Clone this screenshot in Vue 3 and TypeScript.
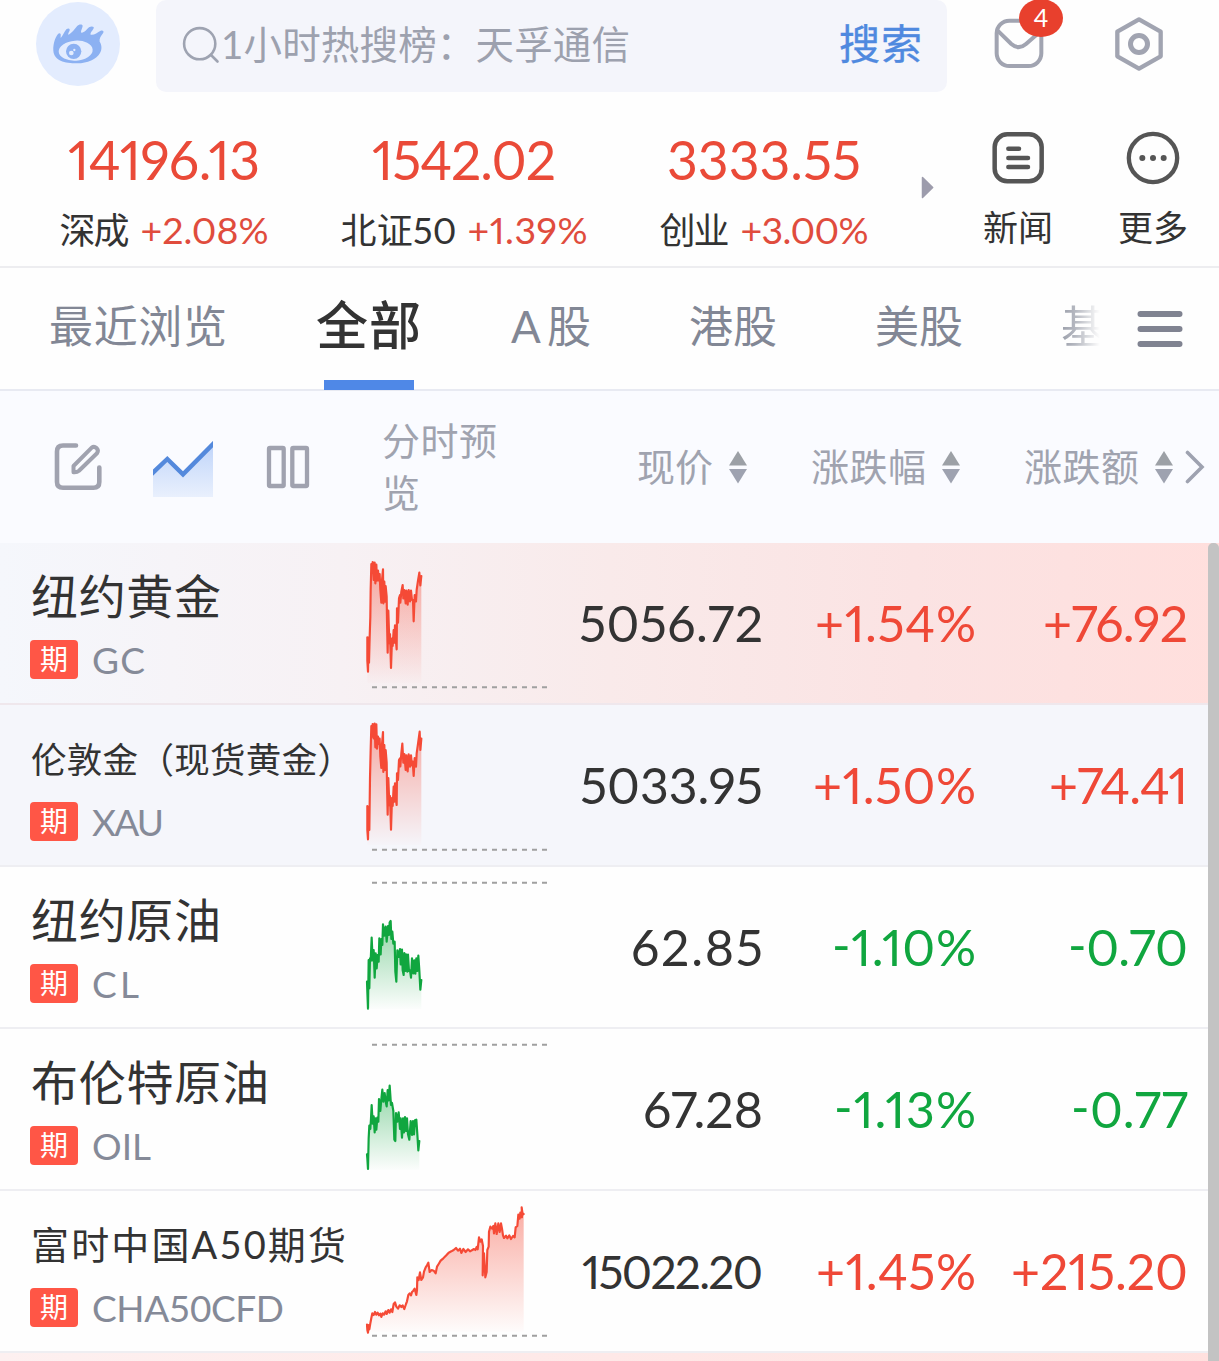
<script setup lang="ts">
import type { Directive } from 'vue'

interface IndexQuote { name: string; value: string; change: string; valueWidth: number; nameWidth: number; changeWidth: number }
interface Figure { text: string; width: number }
interface Quote {
  name: string
  size: 'lg' | 'md' | 'sm'
  nameWidth: number
  code: string
  codeWidth: number
  trend: 'up' | 'down'
  price: Figure
  percent: Figure
  change: Figure
  compact?: boolean
  top: number
  dash: number
  floor: number
  line: string
}

/* Adjusts tracking so that a label occupies the given width. */
const vFit: Directive<HTMLElement, number> = {
  mounted(el, { value }) {
    const gaps = (el.textContent ?? '').trim().length - 1
    if (gaps < 1) return
    const spacing = (value - el.getBoundingClientRect().width) / gaps
    el.style.letterSpacing = `${spacing}px`
    el.style.marginRight = `${-spacing}px`
  },
}

const indices: IndexQuote[] = [
  { name: '深成', value: '14196.13', change: '+2.08%', valueWidth: 192, nameWidth: 70, changeWidth: 128 },
  { name: '北证50', value: '1542.02', change: '+1.39%', valueWidth: 184, nameWidth: 116, changeWidth: 120 },
  { name: '创业', value: '3333.55', change: '+3.00%', valueWidth: 194, nameWidth: 70, changeWidth: 128 },
]

const quotes: Quote[] = [
  {
    name: '纽约黄金', size: 'lg', nameWidth: 190, code: 'GC', codeWidth: 53, trend: 'up', top: 9, dash: 442, floor: 430,
    price: { text: '5056.72', width: 184 }, percent: { text: '+1.54%', width: 161 }, change: { text: '+76.92', width: 145 },
    line: '82,292 82,362 84,395 86,292 87,368 89,292 91,230 92,150 94,72 96,98 98,66 101,120 104,68 106,130 109,74 111,122 114,92 117,122 119,102 121,150 124,188 126,120 129,88 130,190 133,125 135,185 137,138 140,170 141,240 143,338 145,212 148,310 150,282 153,384 156,296 158,318 161,270 163,308 165,256 168,305 170,328 171,205 174,248 177,175 180,165 181,188 184,155 188,135 190,175 193,150 197,190 199,152 203,194 206,150 210,184 213,152 216,180 219,180 221,244 224,165 228,184 230,150 234,122 238,98 241,136 244,108',
  },
  {
    name: '伦敦金（现货黄金）', size: 'sm', nameWidth: 322, code: 'XAU', codeWidth: 72, trend: 'up', top: 495, dash: 929, floor: 915,
    price: { text: '5033.95', width: 183 }, percent: { text: '+1.50%', width: 163 }, change: { text: '+74.41', width: 139 },
    line: '82,798 82,870 84,898 86,800 88,870 90,715 92,630 94,558 96,590 98,552 101,595 104,551 106,622 109,553 111,626 114,590 117,612 119,596 121,650 124,684 126,612 129,576 130,696 133,615 135,690 137,630 140,668 141,730 143,824 145,714 148,796 150,768 153,869 156,774 158,798 161,740 163,785 165,730 168,780 170,795 171,700 174,720 177,660 180,655 181,679 184,640 187,611 190,668 193,642 197,690 199,646 203,694 206,643 210,680 213,646 216,676 218,665 221,708 224,654 228,680 230,640 234,612 239,575 241,630 244,596',
  },
  {
    name: '纽约原油', size: 'lg', nameWidth: 190, code: 'CL', codeWidth: 47, trend: 'down', top: 6, dash: 53, floor: 432,
    price: { text: '62.85', width: 132 }, percent: { text: '-1.10%', width: 144 }, change: { text: '-0.70', width: 120 },
    line: '81,350 82,380 84,431 86,285 88,370 90,280 92,288 95,218 98,286 101,255 104,338 107,265 110,310 113,270 116,290 118,220 122,268 124,222 127,240 129,178 133,212 137,185 140,230 144,183 147,210 149,172 152,168 154,222 157,200 160,236 164,230 166,320 169,350 172,256 176,276 180,252 182,298 186,254 188,316 191,330 193,264 196,318 198,268 202,320 204,269 207,318 210,316 213,338 216,280 220,325 223,286 226,326 229,280 232,318 235,272 238,316 241,374 244,345',
  },
  {
    name: '布伦特原油', size: 'lg', nameWidth: 238, code: 'OIL', codeWidth: 59, trend: 'down', top: 492, dash: 539, floor: 915,
    price: { text: '67.28', width: 120 }, percent: { text: '-1.13%', width: 142 }, change: { text: '-0.77', width: 117 },
    line: '81,868 82,880 84,912 86,820 88,782 91,792 93,760 95,720 98,776 101,754 104,802 106,760 109,794 112,758 115,770 117,702 121,738 124,702 127,674 130,710 134,684 137,710 140,724 143,675 146,706 149,662 153,720 156,714 160,738 163,824 166,828 168,744 172,770 176,742 180,792 182,760 186,818 189,760 192,802 195,756 198,798 201,760 204,808 208,824 212,768 216,810 219,768 222,808 225,766 229,764 232,808 235,856 238,828',
  },
  {
    name: '富时中国A50期货', size: 'md', nameWidth: 315, code: 'CHA50CFD', codeWidth: 192, trend: 'up', compact: true, top: 3, dash: 437, floor: 425,
    price: { text: '15022.20', width: 181 }, percent: { text: '+1.45%', width: 160 }, change: { text: '+215.20', width: 177 },
    line: '81,404 82,420 84,428 86,405 88,418 91,400 94,384 97,370 101,375 105,366 109,374 113,368 117,376 121,371 124,381 128,370 132,374 137,364 140,372 145,360 149,368 153,358 157,366 161,342 165,337 169,350 174,356 179,346 184,351 188,346 193,357 198,342 201,334 205,315 209,310 213,316 216,306 220,302 224,296 229,315 231,300 232,262 236,270 240,247 244,270 249,262 252,245 257,232 261,226 265,218 269,246 275,240 281,242 287,250 291,230 296,222 302,212 310,205 319,196 326,188 334,184 341,180 348,174 354,182 360,176 364,189 370,177 377,186 384,178 390,184 397,180 402,177 406,180 410,171 413,178 417,142 421,155 425,148 429,168 428,256 432,190 436,262 440,246 442,180 446,170 447,125 451,110 456,116 460,108 462,130 466,100 470,132 475,100 479,126 483,100 486,116 489,136 492,144 498,137 502,145 508,136 513,147 519,138 524,142 527,112 532,108 535,74 539,86 541,68 546,82 545,52 548,74 551,72',
  },
]

const areaOf = (q: Quote): string => {
  const pts = q.line.split(' ')
  const first = pts[0].split(',')[0]
  const last = pts[pts.length - 1].split(',')[0]
  return `${first},${q.floor} ${q.line} ${last},${q.floor}`
}
const tabs = [
  { label: 'A股', width: 80, cls: 'tab-a' },
  { label: '港股', width: 88, cls: 'tab-hk' },
  { label: '美股', width: 88, cls: 'tab-us' },
]
const sortable = [
  { label: '现价', cls: 'h-price', width: 76 },
  { label: '涨跌幅', cls: 'h-pct', width: 115 },
  { label: '涨跌额', cls: 'h-chg', width: 115 },
]
</script>

<template>
  <main class="app">
    <header class="topbar">
      <svg class="logo" viewBox="108 5 252 252">
        <circle cx="234" cy="131" r="126" fill="#e3ecfe" />
        <path fill="#8cb1f2" d="M160 151C159 128 167 110 174 101C179 96 184 100 182 108L182 113C189 107 192 95 199 87C206 81 212 86 208 93C205 99 203 103 206 103C215 99 224 86 231 78C236 71 247 71 248 76C248 82 241 92 244 97C251 99 261 87 267 81C274 76 284 78 281 84C277 92 270 98 272 103C281 106 292 96 302 91C309 89 313 93 309 99C303 107 297 115 299 124C306 134 306 149 300 158C290 176 262 189 232 189C193 189 162 180 160 151Z" />
        <ellipse cx="227" cy="151" rx="51" ry="30" fill="#e3ecfe" transform="rotate(-4 227 151)" />
        <circle cx="221" cy="153" r="23" fill="#8cb1f2" />
        <circle cx="214" cy="158" r="7" fill="#e3ecfe" /><circle cx="223" cy="149" r="3.5" fill="#e3ecfe" />
      </svg>
      <div class="search">
        <svg class="magnifier" width="40" height="42" viewBox="180 22 40 42" fill="none" stroke="#9ea3b1" stroke-width="2.6" stroke-linecap="round">
          <circle cx="199.7" cy="42.7" r="15.6" /><path d="M211 54L217.500 60.500" />
        </svg>
        <span v-fit="409" class="hot">1小时热搜榜：天孚通信</span>
        <span class="go">搜索</span>
      </div>
      <div class="mail">
        <svg width="50" height="52" viewBox="523 55 150 156" fill="none" stroke="#a1a4b1" stroke-width="12" stroke-linecap="round">
          <rect x="531" y="63" width="134" height="136" rx="38" /><path d="M534 93L575 133Q597 152 619 133L661 96" />
        </svg>
        <span class="badge">4</span>
      </div>
      <svg class="gear" width="50" height="56" viewBox="882 47 150 168" fill="none" stroke="#a1a4b1" stroke-width="13" stroke-linejoin="round">
        <path d="M957 57L1022 94V168L957 205L892 168V94Z" /><circle cx="957" cy="131" r="25.500" stroke-width="15" />
      </svg>
    </header>

    <section class="indices">
      <div class="index-list">
        <div v-for="i in indices" :key="i.name" class="index">
          <div class="index-value"><span v-fit="i.valueWidth" class="fit">{{ i.value }}</span></div>
          <div class="index-sub">
            <span class="index-name"><span v-fit="i.nameWidth" class="fit">{{ i.name }}</span></span>
            <span class="index-change"><span v-fit="i.changeWidth" class="fit">{{ i.change }}</span></span>
          </div>
        </div>
      </div>
      <svg class="next" width="13" height="23" viewBox="0 0 13 23"><path d="M1.500 1.500L11.700 11.500L1.500 21.500Z" fill="#9d9cac" stroke="#9d9cac" stroke-width="1.500" stroke-linejoin="round" /></svg>
      <div class="shortcut news">
        <svg width="54" height="54" viewBox="513 392 162 162" fill="none" stroke="#555" stroke-width="13.500" stroke-linecap="round">
          <rect x="524" y="402" width="141" height="141" rx="38" /><path d="M565 445.500H597M565 473H624M565 500H624" />
        </svg>
        <span v-fit="70" class="fit">新闻</span>
      </div>
      <div class="shortcut more">
        <svg width="54" height="54" viewBox="918 392 162 162">
          <circle cx="999" cy="473" r="72.500" fill="none" stroke="#555" stroke-width="13" />
          <g fill="#555"><circle cx="967" cy="473" r="9" /><circle cx="999" cy="473" r="9" /><circle cx="1031" cy="473" r="9" /></g>
        </svg>
        <span v-fit="70" class="fit">更多</span>
      </div>
    </section>

    <nav class="tabs">
      <span class="tab tab-recent"><span v-fit="178" class="fit">最近浏览</span></span>
      <span class="tab tab-all"><span v-fit="105" class="fit">全部</span></span>
      <span v-for="t in tabs" :key="t.label" class="tab" :class="t.cls"><span v-fit="t.width" class="fit">{{ t.label }}</span></span>
      <span class="tab tab-fund">基金</span>
      <svg class="menu" width="46" height="38" viewBox="0 0 46 38" stroke="#808391" stroke-width="6" stroke-linecap="round"><path d="M3.500 4H42.500M3.500 19H42.500M3.500 34H42.500" /></svg>
    </nav>

    <section class="columns">
      <svg class="ic-edit" width="50" height="50" viewBox="54 442 50 50" fill="none" stroke="#a0a2af" stroke-width="4.600" stroke-linecap="round" stroke-linejoin="round">
        <path d="M76 445.500H63Q57 445.500 57 451.500V482Q57 487.700 63 487.700H93.500Q99.300 487.700 99.300 482V467.500" />
        <path stroke-width="4" d="M73.500 472.200V466L91.500 447.800Q94 445.800 96.500 448Q99 450.500 97 453.200L79 470.800Q77 472.500 73.500 472.200Z" />
      </svg>
      <svg class="ic-chart" width="60" height="56" viewBox="153 441 60 56">
        <defs><linearGradient id="chartIcon" x1="0" y1="0" x2="0" y2="1"><stop offset="0" stop-color="#bfd4fa" /><stop offset="1" stop-color="#e9f0fd" /></linearGradient></defs>
        <path d="M153 472L167.500 459L183 474L213 443V497H153Z" fill="url(#chartIcon)" />
        <path d="M151 474.500L167.300 459L183 474.300L216 441" fill="none" stroke="#5489dc" stroke-width="4.400" />
      </svg>
      <svg class="ic-cols" width="44" height="44" viewBox="266 445 44 44" fill="none" stroke="#a0a2af" stroke-width="4.300" stroke-linejoin="round">
        <rect x="269" y="448" width="14.700" height="38" rx="1" /><rect x="292.300" y="448" width="14.700" height="38" rx="1" />
      </svg>
      <span class="h-preview">分时预览</span>
      <span v-for="s in sortable" :key="s.label" class="h-sort" :class="s.cls">
        <span class="h-label"><span v-fit="s.width" class="fit">{{ s.label }}</span></span>
        <svg width="18" height="34" viewBox="0 0 18 34"><path d="M9 1L18 15.500H0Z" fill="#9ca0a6" /><path d="M0 19H18L9 33.500Z" fill="#9ea2b0" /></svg>
      </span>
      <svg class="chev" width="20" height="34" viewBox="0 0 20 34" fill="none" stroke="#9ea2b0" stroke-width="3.600" stroke-linecap="round"><path d="M2.500 2.500L17 17L2.500 31.500" /></svg>
    </section>

    <section class="list">
      <div class="rows">
        <article v-for="(q, n) in quotes" :key="q.code" class="row" :class="{ flash: n === 0, pinned: n === 1 }">
          <div class="title">
            <div class="name" :class="q.size"><span v-fit="q.nameWidth" class="fit">{{ q.name }}</span></div>
            <div class="meta"><span class="tag">期</span><span v-fit="q.codeWidth" class="fit code">{{ q.code }}</span></div>
          </div>
          <svg class="spark" width="190" height="161" :viewBox="`60 ${q.top} 570 483`" :class="q.trend">
            <defs>
              <linearGradient :id="`fill-${q.code}`" x1="0" y1="0" x2="0" y2="1">
                <stop offset="0" stop-color="currentColor" stop-opacity=".46" /><stop offset="1" stop-color="currentColor" stop-opacity=".01" />
              </linearGradient>
            </defs>
            <polygon :points="areaOf(q)" :fill="`url(#fill-${q.code})`" />
            <path :d="`M96 ${q.dash}H622`" stroke="#a0a0a0" stroke-width="6" stroke-dasharray="15 15" />
            <polyline :points="q.line" fill="none" stroke="currentColor" stroke-width="6.500" stroke-linejoin="round" stroke-linecap="round" />
          </svg>
          <div class="num price" :class="{ compact: q.compact }"><span v-fit="q.price.width" class="fit">{{ q.price.text }}</span></div>
          <div class="num" :class="q.trend"><span v-fit="q.percent.width" class="fit">{{ q.percent.text }}</span></div>
          <div class="num" :class="q.trend"><span v-fit="q.change.width" class="fit">{{ q.change.text }}</span></div>
        </article>
        <div class="peek"></div>
      </div>
      <div class="scrollbar"></div>
    </section>
  </main>
</template>

<style>
body { background: #fff; }
</style>

<style scoped>
.app { width: 1219px; height: 1361px; overflow: hidden; background: #fefefe; font-family: Lato, "Noto Sans CJK SC", sans-serif; color: #333; display: flex; flex-direction: column; white-space: nowrap; }
.app * { box-sizing: border-box; }
svg { display: block; flex: none; }
.fit { display: inline-block; flex: none; }

.topbar { display: flex; height: 92px; flex: none; align-items: flex-start; }
.logo { width: 84px; height: 84px; margin: 2px 0 0 36px; }
.search { margin-left: 36px; width: 791px; height: 92px; background: #f4f5fb; border-radius: 10px; display: flex; align-items: center; flex: none; padding: 0 24px 4px 24px; }
.hot { font-size: 38.500px; line-height: 50px; color: #9da1ae; flex: none; display: inline-block; margin-left: 1px; }
.go { margin-left: auto; font-size: 41px; letter-spacing: 1px; line-height: 50px; font-weight: 400; -webkit-text-stroke: .4px currentColor; color: #4f89df; }
.mail { position: relative; margin: 18px 0 0 47px; width: 50px; flex: none; }
.badge { position: absolute; left: 25px; top: -19px; width: 44px; height: 38px; border-radius: 50%; background: #e8402d; color: #fff; font-size: 25px; line-height: 37px; text-align: center; }
.gear { margin: 16px 0 0 70px; }

.indices { display: flex; height: 176px; flex: none; border-bottom: 2px solid #ededf0; }
.index-list { display: grid; grid-template-columns: repeat(3, 300px); margin-left: 14px; height: 100%; }
.index { display: flex; flex-direction: column; align-items: center; }
.index-value, .index-sub, .num { font-feature-settings: "pnum", "case"; }
.index-value { margin-top: 35px; height: 64px; line-height: 64px; font-size: 53.500px; color: #ea4a38; }
.index-sub { display: flex; gap: 11px; margin-top: 14px; line-height: 50px; font-size: 36px; }
.index-change { color: #e04c3d; font-size: 37.500px; }
.next { margin: 84px 0 0 7px; }
.shortcut { display: flex; flex-direction: column; align-items: center; width: 90px; margin-top: 39px; font-size: 35px; line-height: 50px; flex: none; gap: 17px; }
.news { margin-left: 39px; }
.more { margin-left: 45px; }

.tabs { display: flex; height: 123px; flex: none; border-bottom: 2px solid #e8eaf2; color: #828795; font-size: 44px; line-height: 60px; align-items: flex-start; padding-left: 49px; }
.tab { flex: none; display: block; margin-top: 28px; }
.tab-all { margin: 26px 0 0 89px; width: 106px; height: 96px; color: #333; font-size: 52px; font-weight: 500; line-height: 62px; background: linear-gradient(#4f88e7, #4f88e7) 8px 100% / 90px 10px no-repeat; }
.tab-a { margin-left: 89px; }
.tab-hk { margin-left: 98px; }
.tab-us { margin-left: 98px; }
.tab-fund { margin-left: 98px; width: 39px; overflow: hidden; -webkit-mask-image: linear-gradient(90deg, #000c 0, #0009 35%, transparent 100%); mask-image: linear-gradient(90deg, #000c 0, #0009 35%, transparent 100%); }
.menu { margin: 42px 0 0 37px; }

.columns { display: grid; grid-template-columns: 99px 113px 116px 255px 174px 213px 161px 1fr; height: 152px; flex: none; background: #fafbff; align-items: center; color: #a0a3af; font-size: 38px; padding-left: 54px; }
.ic-chart { margin-top: 3px; }
.h-preview { width: 120px; white-space: normal; line-height: 52px; letter-spacing: .5px; margin-top: -2px; }
.h-sort { display: flex; align-items: center; gap: 16px; line-height: 50px; }
.h-label { margin-top: -2px; }

.list { display: flex; flex: 1; position: relative; min-height: 0; }
.rows { width: 1219px; }
.row { display: grid; grid-template-columns: 330px 190px 213px 213px 212px; height: 162px; border-bottom: 2px solid #eeeef2; padding-left: 30px; }
.flash { background: linear-gradient(90deg, #f5f7fc 0, #f7f1f4 28%, #f9eaea 50%, #fbe3e3 75%, #ffdfdd 100%); border-bottom-color: #efe7ec; }
.pinned { background: #f5f6fb; }
.name { height: 60px; line-height: 60px; margin-top: 23px; padding-left: 1px; }
.name.lg { font-size: 47px; }
.name.md { font-size: 38px; }
.name.sm { font-size: 35.500px; margin-top: 25px; margin-bottom: -2px; }
.meta { display: flex; margin-top: 14px; height: 39px; line-height: 39px; }
.tag { width: 48px; height: 39px; border-radius: 4px; background: #ff5646; color: #fff; font-size: 28px; text-align: center; line-height: 38px; }
.code { font-size: 37px; color: #858a98; margin-left: 14px; line-height: 40px; }
.num { text-align: right; font-size: 50px; line-height: 161px; height: 160px; }
.num.up { color: #ef4837; }
.spark.up { color: #f54a36; }
.num.down, .spark.down { color: #10a63f; }
.num.compact { font-size: 46px; }
.peek { height: 20px; background: linear-gradient(90deg, #fdf0f0, #ffe0de); }
.scrollbar { position: absolute; right: 0; top: 0; width: 11px; height: 840px; background: #c3c3c3; border-radius: 5px; }
</style>
